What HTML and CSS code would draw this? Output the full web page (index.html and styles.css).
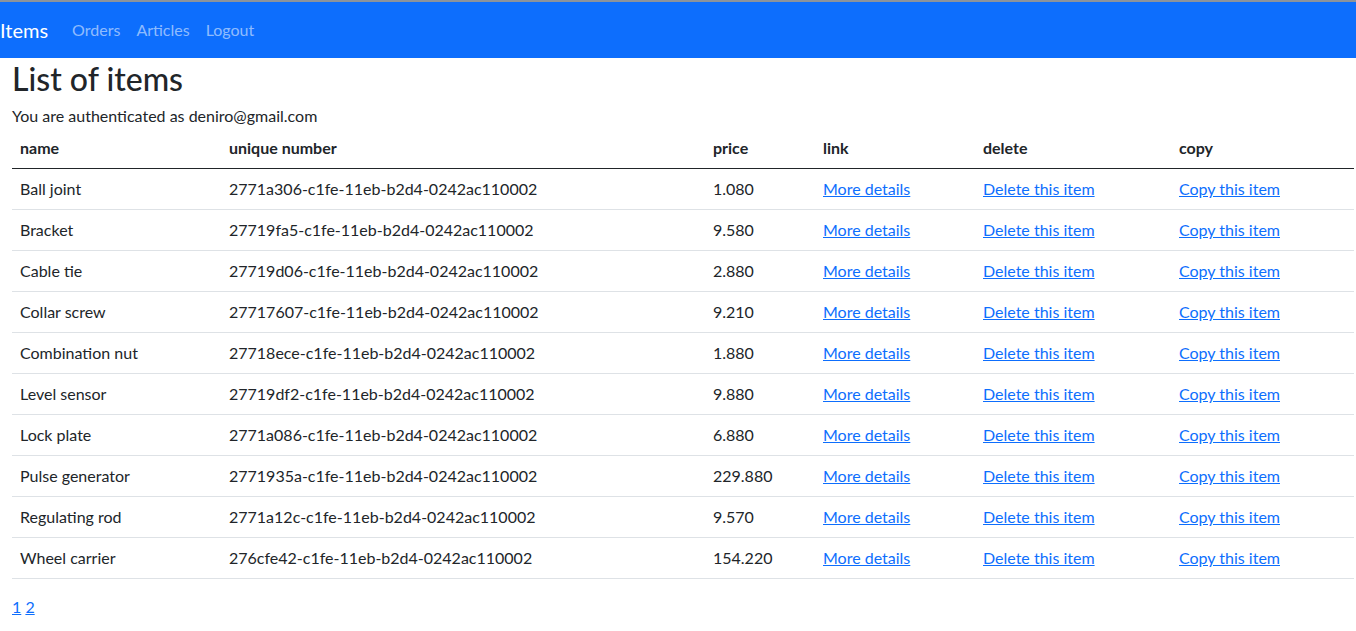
FILE: index.html
```html
<!DOCTYPE html>
<html lang="en">
<head>
<meta charset="utf-8">
<title>Items</title>
<link rel="stylesheet" href="styles.css">
</head>
<body>
<nav class="navbar">
  <a class="brand" href="#">Items</a>
  <a class="nav-link" href="#">Orders</a>
  <a class="nav-link" href="#">Articles</a>
  <a class="nav-link" href="#">Logout</a>
</nav>
<main class="content">
  <h1 class="title">List of items</h1>
  <p class="auth">You are authenticated as deniro@gmail.com</p>
  <table class="items">
    <colgroup>
      <col class="c-name"><col class="c-uid"><col class="c-price"><col class="c-link"><col class="c-del"><col>
    </colgroup>
    <thead>
      <tr><th>name</th><th>unique number</th><th>price</th><th>link</th><th>delete</th><th>copy</th></tr>
    </thead>
    <tbody>
      <tr><td>Ball joint</td><td>2771a306-c1fe-11eb-b2d4-0242ac110002</td><td>1.080</td><td><a href="#">More details</a></td><td><a href="#">Delete this item</a></td><td><a href="#">Copy this item</a></td></tr>
      <tr><td>Bracket</td><td>27719fa5-c1fe-11eb-b2d4-0242ac110002</td><td>9.580</td><td><a href="#">More details</a></td><td><a href="#">Delete this item</a></td><td><a href="#">Copy this item</a></td></tr>
      <tr><td>Cable tie</td><td>27719d06-c1fe-11eb-b2d4-0242ac110002</td><td>2.880</td><td><a href="#">More details</a></td><td><a href="#">Delete this item</a></td><td><a href="#">Copy this item</a></td></tr>
      <tr><td>Collar screw</td><td>27717607-c1fe-11eb-b2d4-0242ac110002</td><td>9.210</td><td><a href="#">More details</a></td><td><a href="#">Delete this item</a></td><td><a href="#">Copy this item</a></td></tr>
      <tr><td>Combination nut</td><td>27718ece-c1fe-11eb-b2d4-0242ac110002</td><td>1.880</td><td><a href="#">More details</a></td><td><a href="#">Delete this item</a></td><td><a href="#">Copy this item</a></td></tr>
      <tr><td>Level sensor</td><td>27719df2-c1fe-11eb-b2d4-0242ac110002</td><td>9.880</td><td><a href="#">More details</a></td><td><a href="#">Delete this item</a></td><td><a href="#">Copy this item</a></td></tr>
      <tr><td>Lock plate</td><td>2771a086-c1fe-11eb-b2d4-0242ac110002</td><td>6.880</td><td><a href="#">More details</a></td><td><a href="#">Delete this item</a></td><td><a href="#">Copy this item</a></td></tr>
      <tr><td>Pulse generator</td><td>2771935a-c1fe-11eb-b2d4-0242ac110002</td><td>229.880</td><td><a href="#">More details</a></td><td><a href="#">Delete this item</a></td><td><a href="#">Copy this item</a></td></tr>
      <tr><td>Regulating rod</td><td>2771a12c-c1fe-11eb-b2d4-0242ac110002</td><td>9.570</td><td><a href="#">More details</a></td><td><a href="#">Delete this item</a></td><td><a href="#">Copy this item</a></td></tr>
      <tr><td>Wheel carrier</td><td>276cfe42-c1fe-11eb-b2d4-0242ac110002</td><td>154.220</td><td><a href="#">More details</a></td><td><a href="#">Delete this item</a></td><td><a href="#">Copy this item</a></td></tr>
    </tbody>
  </table>
  <div class="pager"><a href="#">1</a> <a href="#">2</a></div>
</main>
</body>
</html>
```
FILE: styles.css
```css
* { box-sizing: border-box; }
html, body { margin: 0; padding: 0; }
body {
  font-family: Lato, "Liberation Sans", sans-serif;
  font-size: 16px;
  line-height: 1.5;
  color: #212529;
  background: #fff;
  border-top: 2px solid #8c939b;
}
.navbar {
  height: 56px;
  background: #0d6efd;
  display: flex;
  align-items: center;
}
.brand {
  color: #fff;
  text-decoration: none;
  font-size: 20px;
  margin-right: 16px;
}
.nav-link {
  color: rgba(255,255,255,0.55);
  text-decoration: none;
  padding: 0 8px;
  font-size: 16px;
}
.content { padding: 0 2px 0 12px; }
.title {
  margin: 0;
  font-size: 32px;
  font-weight: 500;
  line-height: 1.2;
  padding-top: 2px;
}
.auth { margin: 6px 0 0 0; }
.items {
  width: 100%;
  border-collapse: collapse;
  table-layout: fixed;
}
.c-name { width: 209px; }
.c-uid { width: 484px; }
.c-price { width: 110px; }
.c-link { width: 160px; }
.c-del { width: 196px; }
.items th {
  text-align: left;
  font-weight: 700;
  padding: 8px;
  border-bottom: 1px solid #212529;
}
.items td {
  padding: 8px;
  border-bottom: 1px solid #dee2e6;
}
.items a, .pager a { color: #0d6efd; text-decoration: underline; }
.pager { margin-top: 16px; }
```
